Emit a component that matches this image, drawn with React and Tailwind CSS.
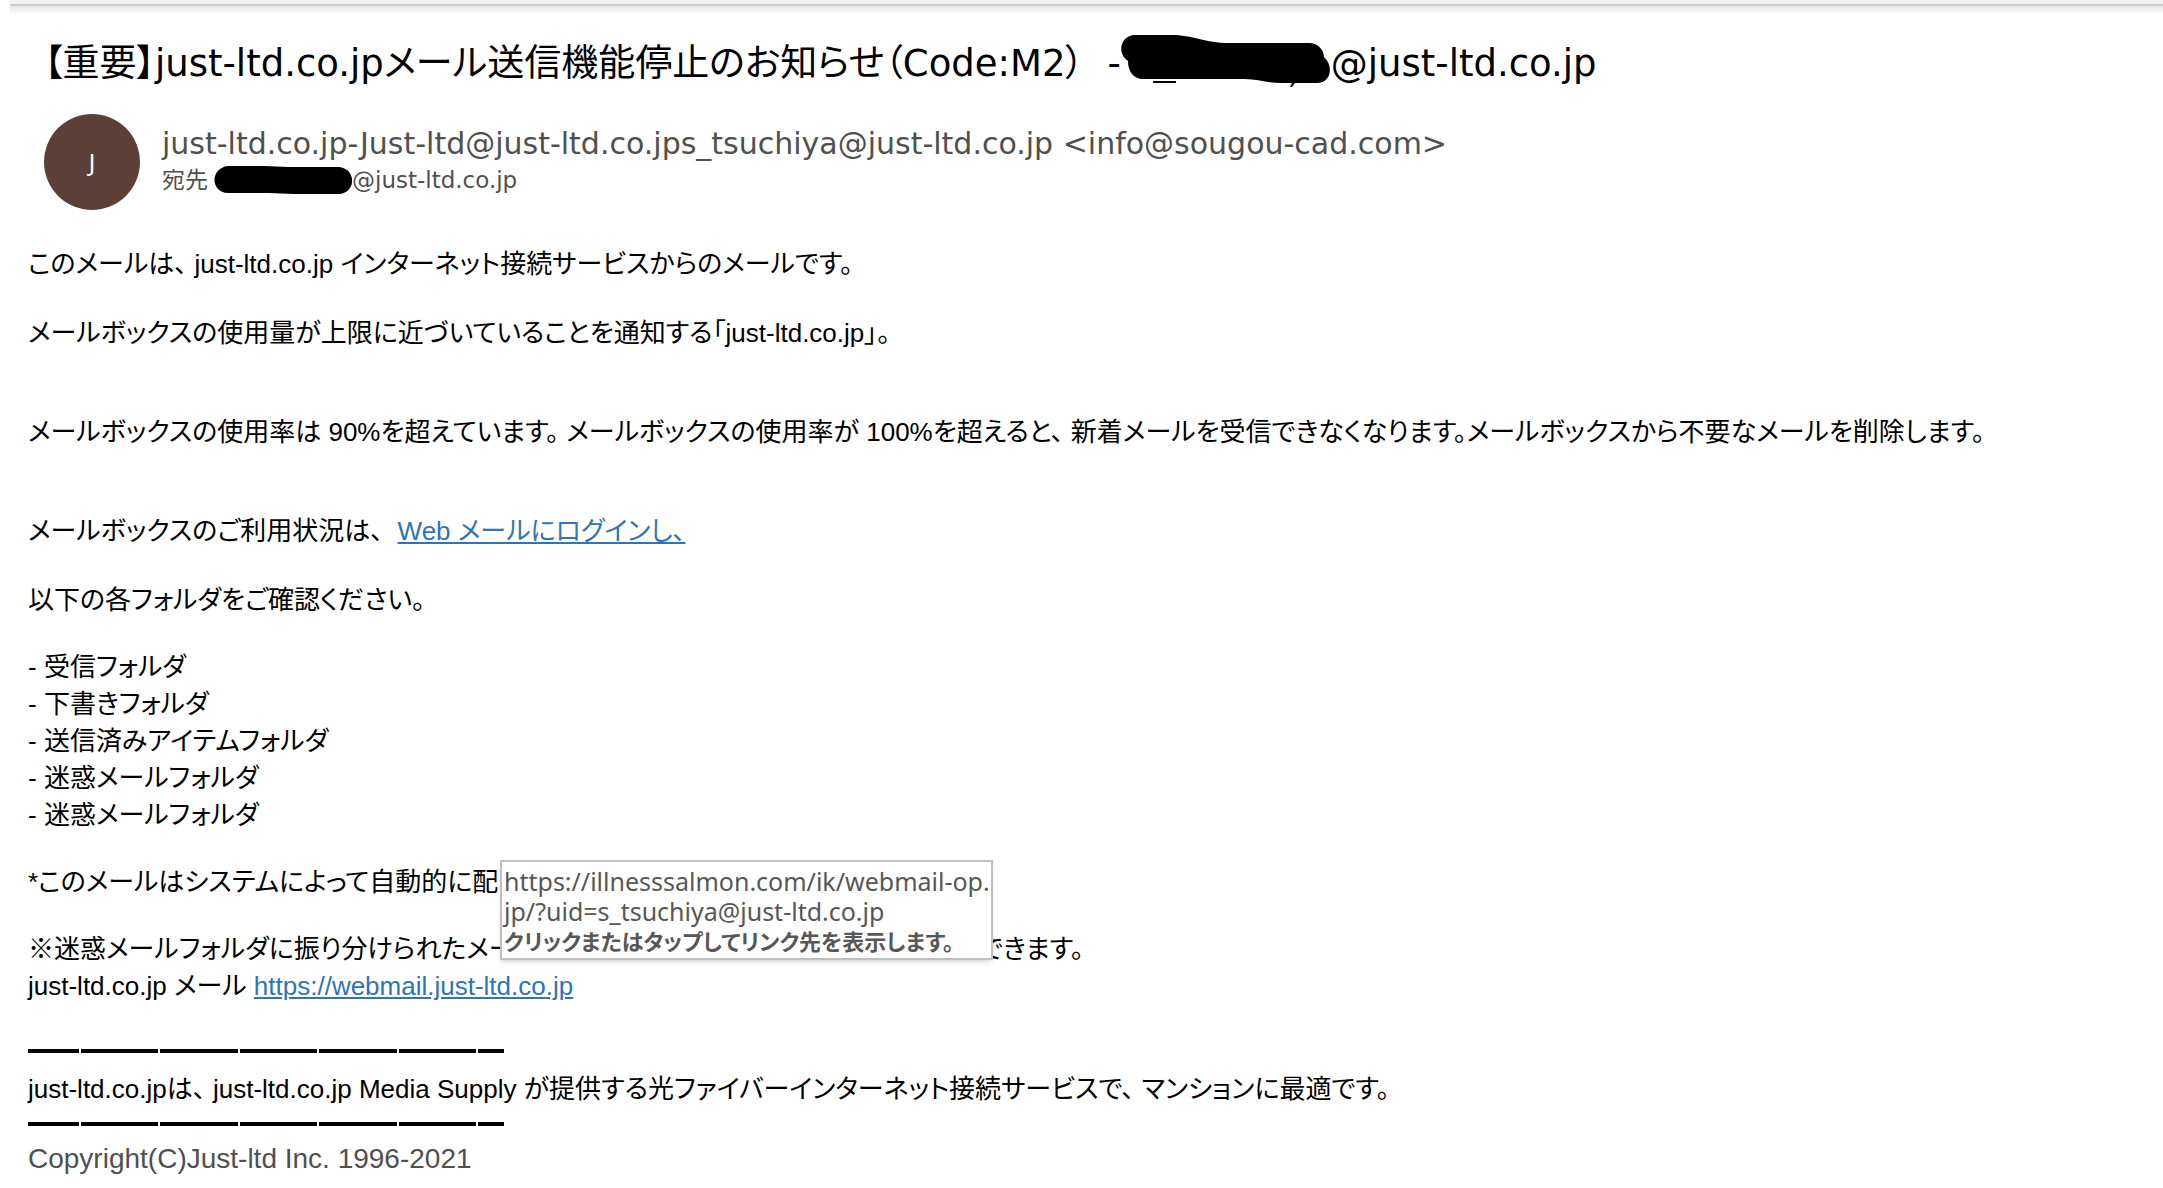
const pageUrl = "#";

function Rule() {
    return (
        <div aria-hidden="true" className="flex h-8 w-[476px] items-center gap-0.5">
            <span className="h-1 w-[51px] bg-black" />
            <span className="h-1 flex-1 bg-black" />
            <span className="h-1 flex-1 bg-black" />
            <span className="h-1 flex-1 bg-black" />
            <span className="h-1 flex-1 bg-black" />
            <span className="h-1 flex-1 bg-black" />
            <span className="h-1 w-[26px] bg-black" />
        </div>
    );
}

function LinkTooltip() {
    return (
        <div
            role="tooltip"
            className="absolute -top-1 left-[472px] h-[100px] w-[493px] border-2 border-[#c0c0c0] bg-white px-0.5 py-1 font-['Noto_Sans','Noto_Sans_CJK_JP',sans-serif] text-[25px] leading-[30px] whitespace-nowrap text-[#575757] shadow-md"
        >
            <p>https://illnesssalmon.com/ik/webmail-op.</p>
            <p>jp/?uid=s_tsuchiya@just-ltd.co.jp</p>
            <p className="text-[22px] font-bold [font-feature-settings:'palt']">クリックまたはタップしてリンク先を表示します。</p>
        </div>
    );
}

export default function App() {
    return (
        <div className="min-h-screen bg-white text-black">
            {/* Bottom edge of the toolbar */}
            <div className="ml-2.5 h-1 bg-[#f0f0f0]" />
            <div className="ml-2.5 h-0.5 bg-[#cccccc]" />
            <div className="ml-2.5 h-2.5 bg-linear-to-b from-[#e8e8e8] to-white" />

            <header className="px-11 pt-[19px] font-['DejaVu_Sans','Noto_Sans_CJK_JP',sans-serif]">
                <h1 className="flex items-center text-[37px] leading-[58px] whitespace-pre">
                    <span className="[font-feature-settings:'palt']">【重要】just-ltd.co.jpメール送信機能停止のお知らせ（Code:M2）  -</span>
                    <svg className="h-[58px] w-[210px]" viewBox="0 0 210 58" aria-hidden="true">
                        <path d="M14 0H50C72 0 84 8 108 8H188C197 8 203 15 203 22C213 31 210 48 196 48H160C146 48 136 44 124 44H22C12 44 7 36 7 26C-5 18 0 0 14 0Z" />
                        <path d="M32 46H55V48H32Z M171 48H174L171 52H169Z" />
                    </svg>
                    <span>@just-ltd.co.jp</span>
                </h1>
                <div className="mt-[21px] flex gap-[22px]">
                    <div className="flex size-24 shrink-0 items-center justify-center rounded-full bg-[#5c4037] font-['Noto_Sans',sans-serif] text-2xl text-white">J</div>
                    <div className="pt-3 text-[#505050]">
                        <p className="text-[30px] leading-9">
                            just-ltd.co.jp-Just-ltd@just-ltd.co.jps_tsuchiya@just-ltd.co.jp &lt;info@sougou-cad.com&gt;
                        </p>
                        <p className="flex items-center text-[23px] leading-9">
                            宛先
                            <svg className="ml-1.5 h-7 w-[138px]" viewBox="0 0 138 28" aria-hidden="true">
                                <path fill="#000" d="M14 0H50L75 1H125C143 3 142 27 125 28H80L55 27H14C-4 26-4 2 14 0Z" />
                            </svg>
                            @just-ltd.co.jp
                        </p>
                    </div>
                </div>
            </header>

            <main className="px-7 pt-9 font-['Liberation_Sans','Noto_Sans_CJK_JP',sans-serif] text-[26px] leading-[37px] [font-feature-settings:'palt']">
                <p>このメールは、 just-ltd.co.jp インターネット接続サービスからのメールです。</p>
                <p className="mt-8">メールボックスの使用量が上限に近づいていることを通知する「just-ltd.co.jp」。</p>
                <p className="mt-[62px]">
                    メールボックスの使用率は 90%を超えています。 メールボックスの使用率が 100%を超えると、 新着メールを受信できなくなります。メールボックスから不要なメールを削除します。
                </p>
                <p className="mt-[62px]">
                    メールボックスのご利用状況は、&nbsp; <a href={pageUrl} className="text-[#2e75b6] underline">Web メールにログインし、</a>
                </p>
                <p className="mt-8">以下の各フォルダをご確認ください。</p>
                <ul className="mt-[30px]">
                    <li>- 受信フォルダ</li>
                    <li>- 下書きフォルダ</li>
                    <li>- 送信済みアイテムフォルダ</li>
                    <li>- 迷惑メールフォルダ</li>
                    <li>- 迷惑メールフォルダ</li>
                </ul>
                <div className="relative mt-[30px]">
                    <p>*このメールはシステムによって自動的に配</p>
                    <p className="mt-[30px] flex">
                        <span className="w-[951px]">※迷惑メールフォルダに振り分けられたメー</span>
                        <span>できます。</span>
                    </p>
                    <LinkTooltip />
                </div>
                <p>
                    just-ltd.co.jp メール <a href={pageUrl} className="text-[#2e75b6] underline">https://webmail.just-ltd.co.jp</a>
                </p>
                <div className="mt-[30px]">
                    <Rule />
                    <p className="mt-1">just-ltd.co.jpは、 just-ltd.co.jp Media Supply が提供する光ファイバーインターネット接続サービスで、 マンションに最適です。</p>
                    <Rule />
                </div>
                <p className="text-[28px] text-[#505050]">Copyright(C)Just-ltd Inc. 1996-2021</p>
            </main>
        </div>
    );
}
